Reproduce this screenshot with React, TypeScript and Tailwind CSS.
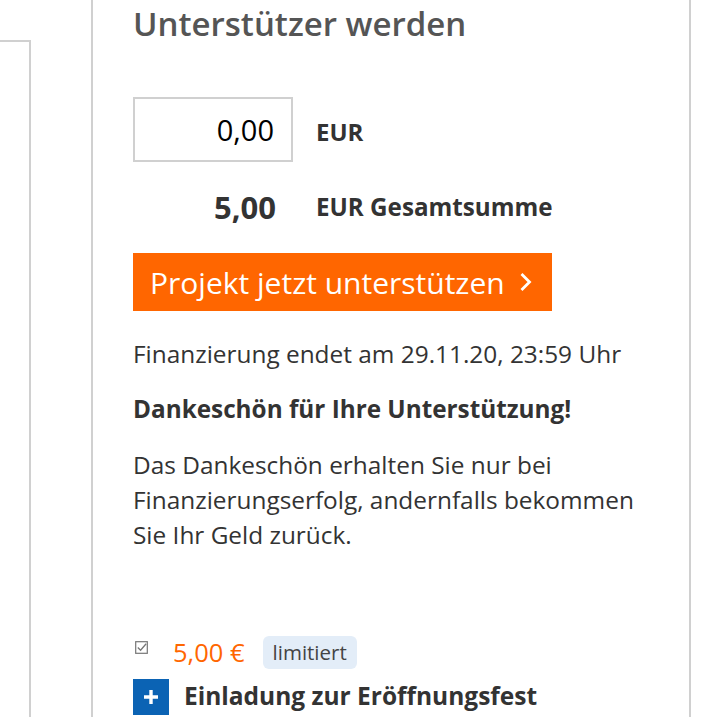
export default function App() {
  return (
    <div className="flex h-[717px] w-[717px] overflow-hidden bg-white font-['Open_Sans',sans-serif] text-[#333]">
      <div className="mt-[40px] h-full w-[31px] border-t-2 border-r-2 border-[#d0d0d0]" />
      <div className="ml-[60px] h-full w-[600px] border-x-2 border-[#d0d0d0] pl-[40px]">
        <h1 className="text-[33px] font-semibold leading-[48px] text-[#555]">Unterstützer werden</h1>

        <div className="mt-[49px] flex items-center">
          <div className="flex h-[65px] w-[160px] items-center justify-end border-2 border-[#d0d0d0] pr-[17px] text-[29px] text-black">
            0,00
          </div>
          <span className="ml-[23px] mt-[5px] text-[24px] font-bold">EUR</span>
        </div>

        <div className="mt-[25px] flex h-[40px] items-center">
          <span className="w-[143px] text-right text-[31px] font-bold">5,00</span>
          <span className="ml-[40px] text-[24.2px] font-bold">EUR Gesamtsumme</span>
        </div>

        <button className="mt-[26px] flex h-[58px] w-[419px] items-center bg-[#ff6600] pl-[17px] text-[30px] text-white">
          Projekt jetzt unterstützen
          <svg viewBox="0 0 14 20" className="ml-[13px] h-[20px] w-[15px]">
            <path d="M3 2l8 8-8 8" fill="none" stroke="currentColor" strokeWidth={2.8} />
          </svg>
        </button>

        <p className="mt-[26px] text-[24.4px] leading-[34px]">Finanzierung endet am 29.11.20, 23:59 Uhr</p>
        <p className="mt-[21px] text-[24.3px] font-bold leading-[34px]">Dankeschön für Ihre Unterstützung!</p>
        <p className="mt-[21px] text-[24.4px] leading-[35px]">
          Das Dankeschön erhalten Sie nur bei
          <br />
          Finanzierungserfolg, andernfalls bekommen
          <br />
          Sie Ihr Geld zurück.
        </p>

        <div className="mt-[81px] flex items-center">
          <svg viewBox="0 0 14 14" className="ml-[2px] mt-[-10px] h-[13px] w-[13px] text-[#777]">
            <rect x="0.75" y="0.75" width="12.5" height="12.5" fill="none" stroke="currentColor" strokeWidth={1.3} />
            <path d="M3 7l3 3 6-7" fill="none" stroke="currentColor" strokeWidth={1.4} />
          </svg>
          <span className="ml-[25px] text-[25.5px] text-[#ff6600]">5,00 €</span>
          <span className="ml-[18px] flex h-[33px] items-center rounded-[6px] bg-[#e3edf8] px-[10px] text-[20.5px] text-[#444]">
            limitiert
          </span>
        </div>

        <div className="mt-[7px] flex items-center">
          <div className="flex h-[36px] w-[36px] items-center justify-center bg-[#0b63b4] text-white">
            <svg viewBox="0 0 20 20" className="h-[20px] w-[20px]">
              <path d="M10 3v14M3 10h14" stroke="currentColor" strokeWidth={3.4} />
            </svg>
          </div>
          <span className="ml-[15px] text-[24.5px] font-bold">Einladung zur Eröffnungsfest</span>
        </div>
      </div>
    </div>
  )
}
